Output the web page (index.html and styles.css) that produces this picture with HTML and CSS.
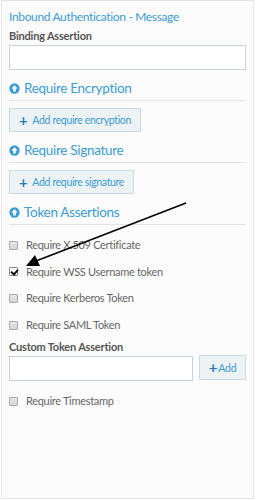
FILE: index.html
```html
<!DOCTYPE html>
<html lang="en">
<head>
    <meta charset="UTF-8">
    <meta name="viewport" content="width=device-width, initial-scale=1.0">
    <title>Inbound Authentication - Message</title>
    <link rel="stylesheet" href="styles.css">
</head>
<body>
    <div class="panel">
        <h2 class="panel-title">Inbound Authentication - Message</h2>

        <div class="form-group">
            <label for="bindingAssertion">Binding Assertion</label>
            <input type="text" id="bindingAssertion" class="text-input">
        </div>

        <h3 class="section-title">
            <svg class="section-icon" viewBox="0 0 16 16"><circle cx="8" cy="8" r="7.5"/><path d="M8 3.2 L12.6 8 H9.8 V12.2 H6.2 V8 H3.4 Z" fill="#fff"/></svg>
            Require Encryption
        </h3>
        <button class="add-btn"><span class="plus">+</span>Add require encryption</button>

        <h3 class="section-title">
            <svg class="section-icon" viewBox="0 0 16 16"><circle cx="8" cy="8" r="7.5"/><path d="M8 3.2 L12.6 8 H9.8 V12.2 H6.2 V8 H3.4 Z" fill="#fff"/></svg>
            Require Signature
        </h3>
        <button class="add-btn"><span class="plus">+</span>Add require signature</button>

        <h3 class="section-title">
            <svg class="section-icon" viewBox="0 0 16 16"><circle cx="8" cy="8" r="7.5"/><path d="M8 3.2 L12.6 8 H9.8 V12.2 H6.2 V8 H3.4 Z" fill="#fff"/></svg>
            Token Assertions
        </h3>

        <div class="check-list">
            <label class="check-item"><input type="checkbox"> Require X.509 Certificate</label>
            <label class="check-item"><input type="checkbox" checked> Require WSS Username token</label>
            <label class="check-item"><input type="checkbox"> Require Kerberos Token</label>
            <label class="check-item"><input type="checkbox"> Require SAML Token</label>
        </div>

        <div class="form-group custom-group">
            <label for="customToken">Custom Token Assertion</label>
            <div class="input-row">
                <input type="text" id="customToken" class="text-input">
                <button class="add-small"><span class="plus">+</span>Add</button>
            </div>
        </div>

        <label class="check-item"><input type="checkbox"> Require Timestamp</label>

        <!-- annotation arrow pointing at the checked option -->
        <svg class="annotation" width="256" height="300" viewBox="0 0 256 300">
            <line x1="186" y1="203" x2="36" y2="261" stroke="#000" stroke-width="1.5"/>
            <path d="M26 266 L35 255 L40 266 Z" fill="#000"/>
        </svg>
    </div>
</body>
</html>
```

FILE: styles.css
```css
* {
    margin: 0;
    padding: 0;
    box-sizing: border-box;
}

body {
    font-family: Lato, "Open Sans", sans-serif;
    background: #fff;
    width: 256px;
    height: 500px;
    padding: 0 2px 1px 1px;
}

.panel {
    position: relative;
    height: 499px;
    background: #fcfcfc;
    border: 1px solid #e3e3e3;
    padding: 7px 7px 0 7px;
}

.panel-title {
    font-size: 12px;
    font-weight: 400;
    letter-spacing: -0.35px;
    color: #3b9bd3;
    line-height: 17px;
    margin-bottom: 4px;
}

.form-group label {
    display: block;
    font-size: 11px;
    font-weight: 700;
    letter-spacing: -0.2px;
    color: #555;
    line-height: 14px;
    margin-bottom: 2px;
}

.text-input {
    display: block;
    width: 100%;
    height: 25px;
    border: 1px solid #c9d2d9;
    background: #fff;
    outline: none;
}

.section-title {
    display: flex;
    align-items: center;
    gap: 4px;
    font-size: 13.5px;
    font-weight: 400;
    letter-spacing: -0.3px;
    color: #3b9bd3;
    line-height: 17px;
    margin-top: 10px;
    padding-bottom: 3px;
    border-bottom: 1px solid #e4e4e4;
}

.section-icon {
    width: 11px;
    height: 11px;
    fill: #3b9bd3;
}

.add-btn {
    display: flex;
    align-items: center;
    margin-top: 7px;
    height: 24px;
    padding: 0 9px 0 9px;
    background: #edf2f5;
    border: 1px solid #cbdce6;
    color: #3b9bd3;
    font-family: inherit;
    font-size: 10.5px;
    letter-spacing: -0.35px;
}

.plus {
    font-size: 15px;
    font-weight: 700;
    color: #2b7cb8;
    margin-right: 5px;
    line-height: 1;
}

.check-list {
    margin-top: 12px;
    display: flex;
    flex-direction: column;
    gap: 10.7px;
}

.check-item {
    display: flex;
    align-items: center;
    gap: 8px;
    font-size: 11px;
    letter-spacing: -0.3px;
    color: #666;
    line-height: 16px;
}

.check-item input {
    appearance: none;
    -webkit-appearance: none;
    position: relative;
    flex: none;
    width: 9px;
    height: 9px;
    margin: 0;
    border: 1px solid #a9a9a9;
    border-radius: 1px;
    background: linear-gradient(#e8e8e8, #d6d6d6);
}

.check-item input:checked {
    background: #fff;
    border-color: #8a8a8a;
}

.check-item input:checked::after {
    content: "";
    position: absolute;
    left: 2px;
    top: 0;
    width: 3px;
    height: 5px;
    border: solid #111;
    border-width: 0 2px 2px 0;
    transform: rotate(40deg);
}

.custom-group {
    margin-top: 7px;
    margin-bottom: 12px;
}

.input-row {
    display: flex;
    gap: 6px;
    align-items: flex-start;
}

.input-row .text-input {
    width: 185px;
}

.add-small {
    display: flex;
    align-items: center;
    justify-content: center;
    margin-top: -1px;
    height: 25px;
    width: 47px;
    background: #edf2f5;
    border: 1px solid #cbdce6;
    color: #3b9bd3;
    font-family: inherit;
    font-size: 10.5px;
    letter-spacing: -0.2px;
}

.add-small .plus {
    margin-right: 1px;
}

.annotation {
    position: absolute;
    left: -2px;
    top: -1px;
    pointer-events: none;
}
```
